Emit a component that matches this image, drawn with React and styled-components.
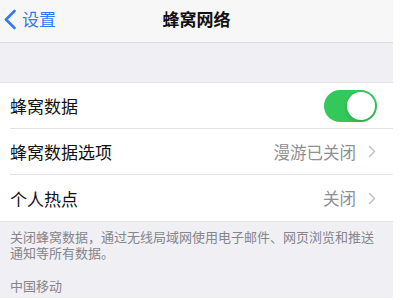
import React, { useState } from 'react';
import styled, { createGlobalStyle } from 'styled-components';

const GlobalStyle = createGlobalStyle`
  html, body {
    margin: 0;
    padding: 0;
    background: #ffffff;
    font-family: "Noto Sans CJK SC", "Noto Sans", sans-serif;
  }
`;

const Screen = styled.div`
  width: 393px;
  height: 298px;
  display: flex;
  flex-flow: column nowrap;
  background: #efeff4;
  overflow: hidden;
`;

const NavBar = styled.div`
  height: 42px;
  flex: none;
  display: grid;
  grid-template-columns: 1fr auto 1fr;
  align-items: center;
  background: #f7f7f8;
  border-bottom: 1px solid #dcdce0;
`;

const BackButton = styled.div`
  display: flex;
  align-items: center;
  gap: 6px;
  padding-left: 4px;
  color: #3478f6;
  font-size: 17px;
  line-height: 20px;
  margin-top: -4px;
`;

const Title = styled.div`
  font-size: 17px;
  font-weight: 600;
  color: #111;
  margin-top: -5px;
`;

const Spacer = styled.div`
  height: 39px;
  flex: none;
  border-bottom: 1px solid #e2e2e6;
`;

const Group = styled.div`
  background: #ffffff;
  display: flex;
  flex-flow: column nowrap;
`;

const Row = styled.div`
  height: 46px;
  display: flex;
  align-items: center;
  justify-content: space-between;
  margin-left: 10px;
  padding-right: 17px;
  border-bottom: ${(p) => (p.last ? 'none' : '1px solid #e3e3e6')};
  box-sizing: border-box;
`;

const Label = styled.span`
  font-size: 17px;
  color: #111;
`;

const Detail = styled.span`
  display: flex;
  align-items: center;
  gap: 12px;
  font-size: 16.5px;
  color: #8e8e93;
`;

const Track = styled.div`
  width: 53px;
  height: 32px;
  border-radius: 16px;
  background: ${(p) => (p.on ? '#34c759' : '#e5e5ea')};
  display: flex;
  align-items: center;
  justify-content: ${(p) => (p.on ? 'flex-end' : 'flex-start')};
  padding: 2px;
  box-sizing: border-box;
  margin-right: -1px;
  cursor: pointer;
`;

const Knob = styled.div`
  width: 28px;
  height: 28px;
  border-radius: 50%;
  background: #ffffff;
  box-shadow: 0 2px 4px rgba(0, 0, 0, 0.15);
`;

const Footer = styled.div`
  flex: 1;
  border-top: 1px solid #e2e2e6;
  padding: 7px 10px 0;
  display: flex;
  flex-flow: column nowrap;
  gap: 17px;
  color: #85858a;
  font-size: 13px;
  line-height: 16px;
`;

const Chevron = () => (
  <svg width="8" height="13" viewBox="0 0 8 13">
    <path d="M1.5 1.5 L6.5 6.5 L1.5 11.5" fill="none" stroke="#c4c4c8" strokeWidth="1.6" strokeLinecap="round" strokeLinejoin="round" />
  </svg>
);

const BackChevron = () => (
  <svg width="12" height="21" viewBox="0 0 12 21">
    <path d="M10.5 2 L2 10.5 L10.5 19" fill="none" stroke="#3478f6" strokeWidth="2.6" strokeLinecap="round" strokeLinejoin="round" />
  </svg>
);

const App = () => {
  const [on, setOn] = useState(true);

  return (
    <>
      <GlobalStyle />
      <Screen>
        <NavBar>
          <BackButton>
            <BackChevron />
            <span>设置</span>
          </BackButton>
          <Title>蜂窝网络</Title>
          <div />
        </NavBar>
        <Spacer />
        <Group>
          <Row>
            <Label>蜂窝数据</Label>
            <Track on={on} onClick={() => setOn(!on)}>
              <Knob />
            </Track>
          </Row>
          <Row>
            <Label>蜂窝数据选项</Label>
            <Detail>
              漫游已关闭
              <Chevron />
            </Detail>
          </Row>
          <Row last>
            <Label>个人热点</Label>
            <Detail>
              关闭
              <Chevron />
            </Detail>
          </Row>
        </Group>
        <Footer>
          <div>关闭蜂窝数据，通过无线局域网使用电子邮件、网页浏览和推送通知等所有数据。</div>
          <div>中国移动</div>
        </Footer>
      </Screen>
    </>
  );
};

export default App;
